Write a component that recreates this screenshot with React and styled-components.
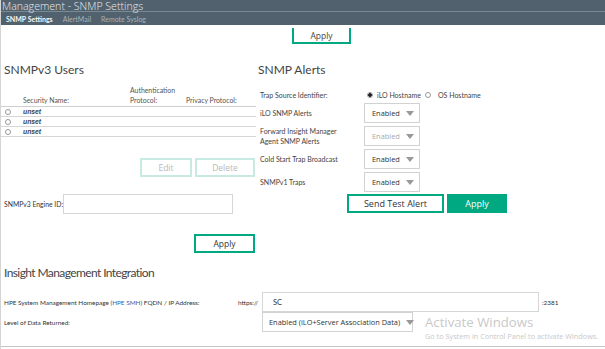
import React from "react";
import styled, { createGlobalStyle } from "styled-components";

const Global = createGlobalStyle`
  html, body { margin: 0; padding: 0; background: #fff; }
  body { font-family: "Lato", "Open Sans", sans-serif; color: #333; }
  * { box-sizing: border-box; }
`;

const Page = styled.div`
  position: relative;
  width: 605px;
  height: 349px;
  overflow: hidden;
  border-left: 1px solid #d4d4d4;
  background: #fff;
`;

const TitleBar = styled.div`
  height: 12px;
  background: #51626e;
  border-bottom: 1px solid #7a8a95;
  color: #e8ecee;
  font-family: "Open Sans", sans-serif;
  font-weight: 300;
  font-size: 10.6px;
  line-height: 12px;
  padding-left: 1px;
  white-space: nowrap;
  position: relative;
  z-index: 1;
`;

const Tabs = styled.div`
  height: 13px;
  background: #51626e;
  display: flex;
  align-items: center;
  gap: 10px;
  padding-left: 5px;
  font-size: 7px;
`;

const Tab = styled.span`
  color: ${(p) => (p.active ? "#f4f6f7" : "#a7b2b9")};
  font-weight: ${(p) => (p.active ? 700 : 400)};
`;

const Button = styled.button`
  display: block;
  font-family: "Open Sans", sans-serif;
  font-size: ${(p) => p.size || 8.5}px;
  height: ${(p) => p.h || 19}px;
  width: ${(p) => p.w}px;
  padding: 0;
  background: ${(p) => (p.primary ? "#01a982" : "#fff")};
  color: ${(p) => (p.primary ? "#fff" : p.disabled ? "#b9b9b9" : "#333")};
  border: 2px solid ${(p) => (p.disabled ? "#c7ebe2" : "#01a982")};
  cursor: pointer;
`;

const TopApplyRow = styled.div`
  display: flex;
  padding: 3px 0 0 291px;
  height: 19px;
`;

const TopApply = styled(Button)`
  border-top: none;
  height: 16px;
  color: #444;
`;

const Columns = styled.div`
  display: grid;
  grid-template-columns: 256px 1fr;
  margin-top: 19px;
`;

const Heading = styled.h2`
  margin: 0;
  font-family: "Lato", "Open Sans", sans-serif;
  font-weight: 400;
  font-size: 12px;
  line-height: 14px;
  letter-spacing: ${(p) => (p.tight ? -0.6 : 0)}px;
  color: #444;
`;

const Left = styled.div`
  padding-left: 3px;
`;

const Table = styled.div`
  margin-top: 4px;
  margin-left: -3px;
  width: 255px;
`;

const TableHead = styled.div`
  display: grid;
  grid-template-columns: 22px 107px 56px 1fr;
  align-items: end;
  font-size: 6.9px;
  line-height: 10px;
  color: #555;
  padding-bottom: 1px;
  border-bottom: 1px solid #cfcfcf;
  height: 26px;
`;

const Row = styled.div`
  display: grid;
  grid-template-columns: 22px 1fr;
  align-items: center;
  height: 10px;
  border-bottom: 1px solid #d6d6d6;
  font-family: "Liberation Sans", sans-serif;
  font-size: 6.8px;
  font-style: italic;
  font-weight: 700;
  color: #444;
`;

const Radio = styled.span`
  display: inline-block;
  width: 6px;
  height: 6px;
  border-radius: 50%;
  border: 1px solid #999;
  margin-left: ${(p) => p.ml || 0}px;
  background: ${(p) =>
    p.checked ? "radial-gradient(circle, #222 0 1.6px, #fff 2px)" : "#fff"};
`;

const ActionRow = styled.div`
  display: flex;
  justify-content: flex-end;
  gap: 3px;
  margin-top: 21px;
  width: 251px;
`;

const EngineRow = styled.div`
  display: flex;
  align-items: center;
  margin-top: 17px;
  font-size: 6.8px;
  color: #333;
`;

const Input = styled.div`
  width: ${(p) => p.w}px;
  height: ${(p) => p.h || 20}px;
  border: 1px solid #d6d6d6;
  font-size: 7.5px;
  display: flex;
  align-items: center;
  padding-left: 10px;
  color: #333;
`;

const ApplyRow = styled.div`
  display: flex;
  justify-content: flex-end;
  width: 251px;
  margin-top: 20px;
`;

const Right = styled.div`
  padding-left: 1px;
`;

const Form = styled.div`
  margin-top: 13px;
  display: grid;
  grid-template-columns: 106px 1fr;
  row-gap: 3px;
  padding-left: 2px;
  font-size: 7px;
  color: #444;
  align-items: center;
`;

const Label = styled.div`
  line-height: 10px;
`;

const RadioGroup = styled.div`
  display: flex;
  align-items: center;
  gap: 4px;
  height: 10px;
  margin-left: 1px;
`;

const Select = styled.div`
  width: ${(p) => p.w || 56}px;
  height: 20px;
  border: 1px solid #d2d2d2;
  display: flex;
  align-items: center;
  gap: 6px;
  padding-left: ${(p) => p.pl || 7}px;
  font-family: "Open Sans", sans-serif;
  font-size: 7.4px;
  color: ${(p) => (p.disabled ? "#aaa" : "#333")};
  margin-left: ${(p) => (p.flush ? 0 : -2)}px;
  white-space: nowrap;
  &::after {
    content: "";
    border-left: 4px solid transparent;
    border-right: 4px solid transparent;
    border-top: 5px solid #999;
  }
`;

const AlertButtons = styled.div`
  display: flex;
  gap: 3px;
  margin: 2px 0 0 89px;
`;

const Integration = styled.div`
  margin-top: 13px;
  padding-left: 3px;
`;

const IntRow = styled.div`
  display: grid;
  grid-template-columns: 234px 24px 277px 1fr;
  align-items: center;
  font-size: 6.4px;
  color: #333;
  margin-top: ${(p) => p.mt || 0}px;
`;

const Link = styled.span`
  color: #2a67b6;
`;

const BottomLine = styled.div`
  position: absolute;
  left: 0;
  right: 0;
  top: 346px;
  border-top: 1px solid #c4c4c4;
`;

const Watermark = styled.div`
  position: absolute;
  left: 424px;
  top: 314px;
  font-family: "Open Sans", sans-serif;
  color: #c9c9c9;
  pointer-events: none;
  white-space: nowrap;
  div:first-child { font-size: 13.2px; line-height: 17px; }
  div:last-child { font-size: 7.3px; line-height: 10px; }
`;

export default function App() {
  return (
    <>
      <Global />
      <Page>
        <TitleBar>Management - SNMP Settings</TitleBar>
        <Tabs>
          <Tab active>SNMP Settings</Tab>
          <Tab>AlertMail</Tab>
          <Tab>Remote Syslog</Tab>
        </Tabs>
        <TopApplyRow>
          <TopApply w={59}>Apply</TopApply>
        </TopApplyRow>

        <Columns>
          <Left>
            <Heading>SNMPv3 Users</Heading>
            <Table>
              <TableHead>
                <span />
                <span>Security Name:</span>
                <span>
                  Authentication
                  <br />
                  Protocol:
                </span>
                <span>Privacy Protocol:</span>
              </TableHead>
              {[0, 1, 2].map((i) => (
                <Row key={i}>
                  <Radio ml={4} />
                  <span>unset</span>
                </Row>
              ))}
            </Table>
            <ActionRow>
              <Button w={52} disabled>
                Edit
              </Button>
              <Button w={60} disabled>
                Delete
              </Button>
            </ActionRow>
            <EngineRow>
              <span>SNMPv3 Engine ID:</span>
              <Input w={170} />
            </EngineRow>
            <ApplyRow>
              <Button w={61}>Apply</Button>
            </ApplyRow>
          </Left>

          <Right>
            <Heading>SNMP Alerts</Heading>
            <Form>
              <Label>Trap Source Identifier:</Label>
              <RadioGroup>
                <Radio checked />
                <span>iLO Hostname</span>
                <Radio />
                <span style={{ marginLeft: 3 }}>OS Hostname</span>
              </RadioGroup>

              <Label>iLO SNMP Alerts</Label>
              <Select>Enabled</Select>

              <Label>
                Forward Insight Manager
                <br />
                Agent SNMP Alerts
              </Label>
              <Select disabled>Enabled</Select>

              <Label>Cold Start Trap Broadcast</Label>
              <Select>Enabled</Select>

              <Label>SNMPv1 Traps</Label>
              <Select>Enabled</Select>
            </Form>
            <AlertButtons>
              <Button w={97} size={9}>
                Send Test Alert
              </Button>
              <Button w={60} primary size={9}>
                Apply
              </Button>
            </AlertButtons>
          </Right>
        </Columns>

        <Integration>
          <Heading tight>Insight Management Integration</Heading>
          <IntRow mt={12}>
            <span>
              HPE System Management Homepage (<Link>HPE SMH</Link>) FQDN / IP
              Address:
            </span>
            <span>https://</span>
            <Input w={277}>SC</Input>
            <span style={{ paddingLeft: 3 }}>:2381</span>
          </IntRow>
          <IntRow>
            <span>Level of Data Returned:</span>
            <span />
            <Select w={151} pl={6} flush>
              Enabled (iLO+Server Association Data)
            </Select>
          </IntRow>
        </Integration>

        <Watermark>
          <div>Activate Windows</div>
          <div>Go to System in Control Panel to activate Windows.</div>
        </Watermark>
        <BottomLine />
      </Page>
    </>
  );
}
